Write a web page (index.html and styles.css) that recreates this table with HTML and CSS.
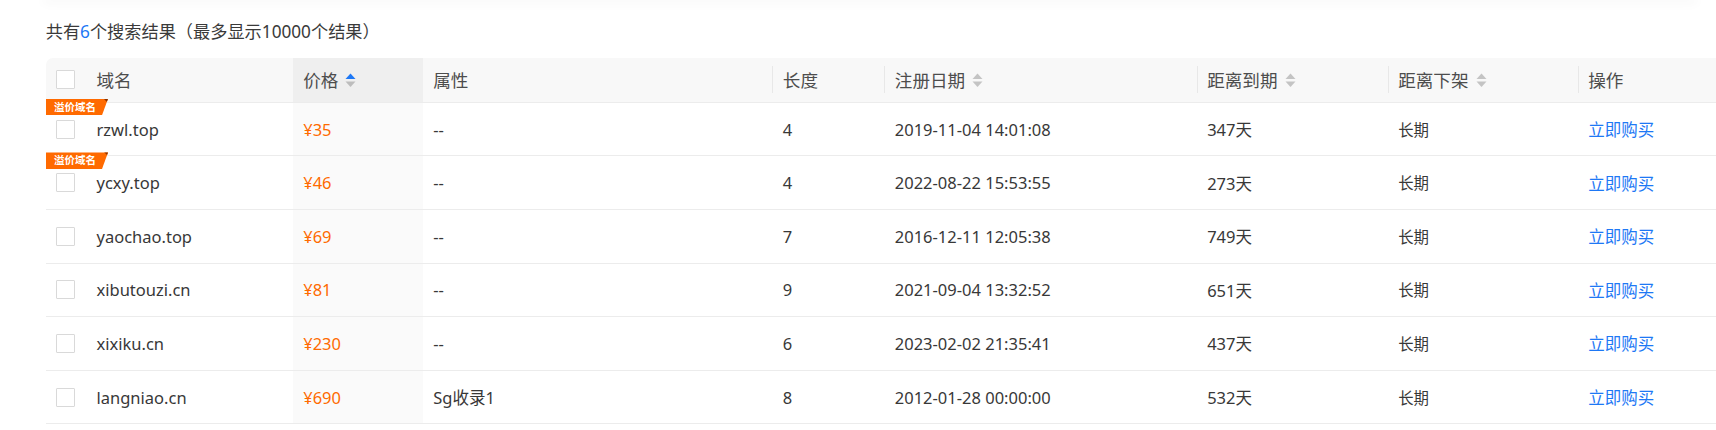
FILE: index.html
```html
<!DOCTYPE html>
<html lang="zh-CN">
<head>
<meta charset="utf-8">
<title>搜索结果</title>
<link rel="stylesheet" href="styles.css">
</head>
<body>
<div class="page">
  <div class="topcard"></div>
  <div class="summary">共有<span class="count">6</span>个搜索结果（最多显示10000个结果）</div>
  <div class="dtable">
    <div class="row head">
      <div class="cell chk"><span class="box"></span></div>
      <div class="cell">域名</div>
      <div class="cell price">价格<svg class="sort" viewBox="0 0 11 15" width="11" height="15"><path d="M0.5 6 L5.5 0.5 L10.5 6 Z" fill="#1e78f5"/><path d="M0.5 8.5 L5.5 14 L10.5 8.5 Z" fill="#bdbdbd"/></svg></div>
      <div class="cell">属性</div>
      <div class="cell sep">长度</div>
      <div class="cell sep">注册日期<svg class="sort" viewBox="0 0 11 15" width="11" height="15"><path d="M0.5 6 L5.5 0.5 L10.5 6 Z" fill="#c4c4c4"/><path d="M0.5 8.5 L5.5 14 L10.5 8.5 Z" fill="#c4c4c4"/></svg></div>
      <div class="cell sep">距离到期<svg class="sort" viewBox="0 0 11 15" width="11" height="15"><path d="M0.5 6 L5.5 0.5 L10.5 6 Z" fill="#c4c4c4"/><path d="M0.5 8.5 L5.5 14 L10.5 8.5 Z" fill="#c4c4c4"/></svg></div>
      <div class="cell sep">距离下架<svg class="sort" viewBox="0 0 11 15" width="11" height="15"><path d="M0.5 6 L5.5 0.5 L10.5 6 Z" fill="#c4c4c4"/><path d="M0.5 8.5 L5.5 14 L10.5 8.5 Z" fill="#c4c4c4"/></svg></div>
      <div class="cell sep">操作</div>
    </div>

    <div class="row">
      <span class="badge">溢价域名</span>
      <div class="cell chk"><span class="box"></span></div>
      <div class="cell">rzwl.top</div>
      <div class="cell price">¥35</div>
      <div class="cell">--</div>
      <div class="cell">4</div>
      <div class="cell">2019-11-04 14:01:08</div>
      <div class="cell">347天</div>
      <div class="cell small">长期</div>
      <div class="cell"><a class="buy" href="#">立即购买</a></div>
    </div>

    <div class="row">
      <span class="badge">溢价域名</span>
      <div class="cell chk"><span class="box"></span></div>
      <div class="cell">ycxy.top</div>
      <div class="cell price">¥46</div>
      <div class="cell">--</div>
      <div class="cell">4</div>
      <div class="cell">2022-08-22 15:53:55</div>
      <div class="cell">273天</div>
      <div class="cell small">长期</div>
      <div class="cell"><a class="buy" href="#">立即购买</a></div>
    </div>

    <div class="row">
      <div class="cell chk"><span class="box"></span></div>
      <div class="cell">yaochao.top</div>
      <div class="cell price">¥69</div>
      <div class="cell">--</div>
      <div class="cell">7</div>
      <div class="cell">2016-12-11 12:05:38</div>
      <div class="cell">749天</div>
      <div class="cell small">长期</div>
      <div class="cell"><a class="buy" href="#">立即购买</a></div>
    </div>

    <div class="row">
      <div class="cell chk"><span class="box"></span></div>
      <div class="cell">xibutouzi.cn</div>
      <div class="cell price">¥81</div>
      <div class="cell">--</div>
      <div class="cell">9</div>
      <div class="cell">2021-09-04 13:32:52</div>
      <div class="cell">651天</div>
      <div class="cell small">长期</div>
      <div class="cell"><a class="buy" href="#">立即购买</a></div>
    </div>

    <div class="row">
      <div class="cell chk"><span class="box"></span></div>
      <div class="cell">xixiku.cn</div>
      <div class="cell price">¥230</div>
      <div class="cell">--</div>
      <div class="cell">6</div>
      <div class="cell">2023-02-02 21:35:41</div>
      <div class="cell">437天</div>
      <div class="cell small">长期</div>
      <div class="cell"><a class="buy" href="#">立即购买</a></div>
    </div>

    <div class="row">
      <div class="cell chk"><span class="box"></span></div>
      <div class="cell">langniao.cn</div>
      <div class="cell price">¥690</div>
      <div class="cell">Sg收录1</div>
      <div class="cell">8</div>
      <div class="cell">2012-01-28 00:00:00</div>
      <div class="cell">532天</div>
      <div class="cell small">长期</div>
      <div class="cell"><a class="buy" href="#">立即购买</a></div>
    </div>
  </div>
</div>
</body>
</html>
```

FILE: styles.css
```css
html, body {
  margin: 0;
  padding: 0;
  background: #fff;
}

body {
  font-family: "Noto Sans", "Noto Sans CJK SC", sans-serif;
  color: #333;
  overflow: hidden;
}

.page {
  display: flex;
  flex-direction: column;
}

.topcard {
  height: 0;
  margin: 0 20px 0 44px;
  box-shadow: 0 0 12px 1px rgba(0, 0, 0, 0.12);
}

.summary {
  margin: 20px 0 0 45.7px;
  font-size: 17.2px;
  line-height: 24px;
  color: #3a3a3a;
}

.count {
  color: #1e78f5;
}

.dtable {
  margin: 13.8px 0 0 46px;
}

.row {
  position: relative;
  display: grid;
  grid-template-columns: 40px 206.7px 130px 349.6px 112px 312.4px 191px 190px 1fr;
  height: 53.6px;
  box-sizing: border-box;
  border-bottom: 1px solid #ececec;
  font-size: 16.5px;
  color: #383838;
}

.row.head {
  height: 45px;
  background: #f8f8f8;
  border-top-left-radius: 7px;
  font-size: 17.6px;
  color: #4d4d4d;
}

.cell {
  position: relative;
  display: flex;
  align-items: center;
  padding-left: 10.5px;
  white-space: nowrap;
}

.cell.chk {
  padding-left: 10px;
}

.cell.price {
  background: #fafafa;
  color: #ff6a00;
}

.head .cell.price {
  background: #efefef;
  color: #4d4d4d;
}

.head .cell.sep::before {
  content: "";
  position: absolute;
  left: 0;
  top: 8px;
  width: 1px;
  height: 27px;
  background: #e8e8e8;
}

.cell.small {
  font-size: 15.4px;
}

.box {
  display: block;
  width: 19px;
  height: 19px;
  box-sizing: border-box;
  border: 1px solid #d9d9d9;
  border-radius: 1px;
  background: #fff;
}

.sort {
  display: block;
  margin-left: 7px;
  margin-top: 2px;
}

.buy {
  color: #1e78f5;
  text-decoration: none;
}

.badge {
  position: absolute;
  left: 0;
  top: -4px;
  z-index: 2;
  width: 62px;
  height: 16.5px;
  box-sizing: border-box;
  padding-left: 8px;
  background: #ff6a00;
  color: #fff;
  font-size: 10.5px;
  line-height: 16.5px;
  font-weight: 700;
  clip-path: polygon(0 0, 100% 0, calc(100% - 6px) 100%, 0 100%);
}

.badge::after {
  content: "";
  position: absolute;
  right: 0;
  top: 0;
  width: 0;
  height: 0;
  border-top: 4px solid #8a3200;
  border-left: 4px solid transparent;
}
```
